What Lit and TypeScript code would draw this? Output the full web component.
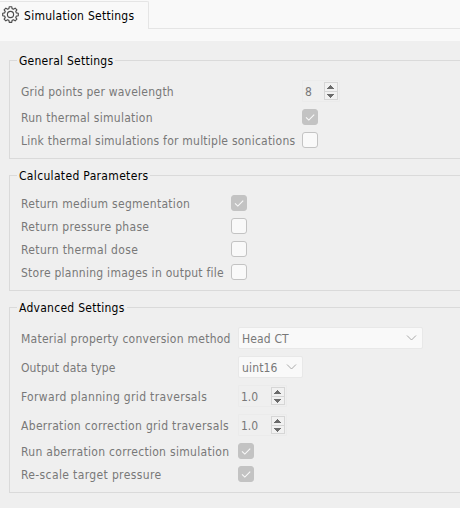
import { LitElement, html, css, svg, nothing } from "lit";
import { customElement, property } from "lit/decorators.js";

type Row = {
  label: string;
  kind: "check" | "spin" | "select";
  track: number;
  value?: string;
  on?: boolean;
  width?: number;
};
type Group = { title: string; track: number; column: number; rows: Row[] };

const groups: Group[] = [
  {
    title: "General Settings",
    track: 0.25,
    column: 281,
    rows: [
      { label: "Grid points per wavelength", track: 0.23, kind: "spin", value: "8", width: 38 },
      { label: "Run thermal simulation", track: 0.27, kind: "check", on: true },
      { label: "Link thermal simulations for multiple sonications", track: 0.23, kind: "check" },
    ],
  },
  {
    title: "Calculated Parameters",
    track: 0.33,
    column: 210,
    rows: [
      { label: "Return medium segmentation", track: 0.29, kind: "check", on: true },
      { label: "Return pressure phase", track: 0.31, kind: "check" },
      { label: "Return thermal dose", track: 0.36, kind: "check" },
      { label: "Store planning images in output file", track: 0.26, kind: "check" },
    ],
  },
  {
    title: "Advanced Settings",
    track: 0.27,
    column: 217,
    rows: [
      { label: "Material property conversion method", track: 0.25, kind: "select", value: "Head CT", width: 185 },
      { label: "Output data type", track: 0.11, kind: "select", value: "uint16", width: 65 },
      { label: "Forward planning grid traversals", track: 0.34, kind: "spin", value: "1.0", width: 49 },
      { label: "Aberration correction grid traversals", track: 0.32, kind: "spin", value: "1.0", width: 49 },
      { label: "Run aberration correction simulation", track: 0.3, kind: "check", on: true },
      { label: "Re-scale target pressure", track: 0.37, kind: "check", on: true },
    ],
  },
];

@customElement("check-box")
export class CheckBox extends LitElement {
  @property({ type: Boolean }) on = false;
  static styles = css`
    :host { display: block; width: 16px; height: 16px; }
    .box { box-sizing: border-box; width: 16px; height: 16px; border: 1px solid #c3c3c3; border-radius: 3px; background: #f9f9f9; }
    .on { background: #c3c3c3; }
    svg { display: block; }
  `;
  render() {
    return html`<div class="box ${this.on ? "on" : ""}">
      ${this.on
        ? html`<svg width="14" height="14" viewBox="0 0 14 14" fill="none" stroke="#fafafa" stroke-width="1.1"><path d="M3 7.4 L5.8 10.1 L11.2 4.6" /></svg>`
        : nothing}
    </div>`;
  }
}

@customElement("spin-box")
export class SpinBox extends LitElement {
  @property() value = "";
  static styles = css`
    :host { display: flex; box-sizing: border-box; height: 22px; border: 1px solid #ebebeb; border-radius: 1px; justify-content: space-between; padding: 1px 1px 1px 2px; }
    .value { line-height: 20px; }
    svg { display: block; }
  `;
  render() {
    return html`<span class="value">${this.value}</span>
      <svg width="14" height="18" viewBox="0 0 14 18" shape-rendering="crispEdges">
        <rect x=".5" y=".5" width="13" height="17" fill="#f1f1f1" stroke="#d6d6d6" />
        <path d="M0 9.5H14" stroke="#d6d6d6" />
        <path d="M6 3h1v1h1v1h1v1h1v1H3V6h1V5h1V4h1z M3 12h7v1h-1v1h-1v1h-1v1h-1v-1H5v-1H4v-1H3z" fill="#6b6b6b" />
      </svg>`;
  }
}

@customElement("select-box")
export class SelectBox extends LitElement {
  @property() value = "";
  static styles = css`
    :host { display: flex; box-sizing: border-box; height: 22px; border: 1px solid #e8e8e8; border-radius: 2px; background: #f9f9f9; justify-content: space-between; align-items: center; padding: 0 5px 0 3px; }
    .value { line-height: 20px; padding-top: 2px; letter-spacing: 0.15px; }
  `;
  render() {
    return html`<span class="value">${this.value}</span>
      <svg width="11" height="8" viewBox="0 0 11 8" fill="none" stroke="#a9a9a9"><path d="M1 1.5L5.5 6L10 1.5" /></svg>`;
  }
}

@customElement("app-root")
export class AppRoot extends LitElement {
  static styles = css`
    :host {
      display: block;
      width: 460px;
      height: 508px;
      overflow: hidden;
      background: #efefef;
      color: #787878;
      font: 12px "DejaVu Sans Condensed", "DejaVu Sans", sans-serif;
      font-stretch: condensed;
      white-space: nowrap;
    }
    .bar { display: flex; box-sizing: border-box; height: 41px; padding-top: 1px; background: #f9f9f9; }
    .tab { display: flex; box-sizing: border-box; width: 149px; height: 28px; border-top: 1px solid #e5e5e5; border-right: 1px solid #e5e5e5; border-top-right-radius: 2px; padding: 4px 0 0 2px; color: #000; gap: 5px; }
    .tab .name { line-height: 20px; letter-spacing: 0.27px; }
    .rest { flex: 1; height: 27px; border-bottom: 1px solid #e5e5e5; }
    .page { display: flex; flex-direction: column; gap: 16px; padding: 19px 0 0 9px; }
    .group { box-sizing: border-box; border: 1px solid #dadada; border-right: 0; padding: 0 0 10px 11px; }
    .title { width: max-content; height: 16px; line-height: 18px; margin: -9px 0 12px -4px; padding: 0 2px; background: #efefef; color: #000; }
    .rows { display: flex; flex-direction: column; gap: 7px; }
    .row { display: flex; align-items: center; }
    .label { height: 16px; line-height: 18px; }
  `;

  private gear() {
    const tooth = Array.from({ length: 8 }, (_, i) => {
      const at = (r: number, deg: number) => {
        const a = ((deg + i * 45 - 90) * Math.PI) / 180;
        return `${(8.5 + r * Math.cos(a)).toFixed(2)} ${(8.5 + r * Math.sin(a)).toFixed(2)}`;
      };
      return `${at(7.9, -9)}L${at(7.9, 9)}L${at(6.1, 15)}L${at(6.1, 30)}`;
    }).join("L");
    return html`<svg width="17" height="17" viewBox="0 0 17 17" fill="none" stroke="#4c4c4c" stroke-width="1.15" stroke-linejoin="round">
      ${svg`<path d="M${tooth}Z" />`}<circle cx="8.5" cy="8.5" r="3.1" />
    </svg>`;
  }

  private control(r: Row) {
    if (r.kind === "check") return html`<check-box ?on=${!!r.on}></check-box>`;
    if (r.kind === "spin") return html`<spin-box .value=${r.value ?? ""} style="width:${r.width}px"></spin-box>`;
    return html`<select-box .value=${r.value ?? ""} style="width:${r.width}px"></select-box>`;
  }

  render() {
    return html`
      <div class="bar">
        <div class="tab">${this.gear()}<span class="name">Simulation Settings</span></div>
        <div class="rest"></div>
      </div>
      <div class="page">
        ${groups.map(
          (g) => html`<section class="group">
            <div class="title" style="letter-spacing:${g.track}px">${g.title}</div>
            <div class="rows">
              ${g.rows.map(
                (r) => html`<div class="row">
                  <span class="label" style="width:${g.column}px;letter-spacing:${r.track}px">${r.label}</span>${this.control(r)}
                </div>`
              )}
            </div>
          </section>`
        )}
      </div>
    `;
  }
}
